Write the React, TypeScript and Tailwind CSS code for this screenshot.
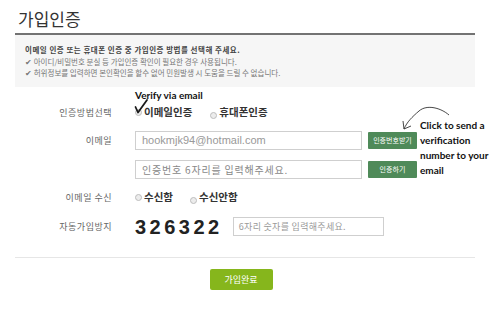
import React from "react";

const KR = { fontFamily: '"Noto Sans CJK KR", "Noto Sans", sans-serif' };
const EN = { fontFamily: 'Lato, "Liberation Sans", sans-serif' };

function Radio() {
  return <span className="inline-block w-[7px] h-[7px] rounded-full border border-[#bdbdbd] bg-[#ececec] shrink-0" />;
}

function Row({ label, children, className = "" }: { label: string; children: React.ReactNode; className?: string }) {
  return (
    <div className={"flex items-center " + className}>
      <div className="w-[112px] text-right text-[9px] tracking-[0.5px] text-[#666] leading-none shrink-0" style={KR}>
        {label}
      </div>
      <div className="ml-[23px] flex items-center">{children}</div>
    </div>
  );
}

export default function App() {
  return (
    <div className="relative w-[500px] h-[313px] bg-white overflow-hidden" style={KR}>
      <div className="ml-[15px] mr-[25px]">
        <h1 className="pl-[3px] pt-[7px] text-[17px] leading-[24px] text-[#333]" style={KR}>
          가입인증
        </h1>
        <div className="mt-[2px] h-[2px] bg-[#737373]" />
        <div className="h-[52px] bg-[#f6f6f6] pl-[10px] pt-[9px] text-[7.5px] leading-[11.5px] text-[#777]">
          <div className="font-bold text-[#444] tracking-[0.5px]">이메일 인증 또는 휴대폰 인증 중 가입인증 방법를 선택해 주세요.</div>
          <div>✔ 아이디/비밀번호 분실 등 가입인증 확인이 필요한 경우 사용됩니다.</div>
          <div>✔ 허위정보를 입력하면 본인확인을 할수 없어 민원발생 시 도움을 드릴 수 없습니다.</div>
        </div>
      </div>

      <div className="mt-[15px]">
        <Row label="인증방법선택" className="h-[20px]">
          <Radio />
          <span className="ml-[2px] text-[10.5px] font-bold text-[#333] leading-none">이메일인증</span>
          <span className="ml-[18px]"><Radio /></span>
          <span className="ml-[2px] text-[10.5px] font-bold text-[#333] leading-none">휴대폰인증</span>
        </Row>

        <Row label="이메일" className="mt-[9px] h-[19px]">
          <div
            className="w-[227px] h-[19px] border border-[#cfcfcf] bg-white pl-[6px] flex items-center text-[11px] text-[#999]"
            style={{ fontFamily: '"Liberation Sans", Arial, sans-serif' }}
          >
            hookmjk94@hotmail.com
          </div>
          <div className="ml-[6px] w-[49px] h-[17px] bg-[#4f8a59] rounded-[1px] flex items-center justify-center text-[7px] text-white leading-none">
            인증번호받기
          </div>
        </Row>

        <Row label="" className="mt-[10px] h-[19px]">
          <div className="w-[227px] h-[19px] border border-[#cfcfcf] bg-white pl-[6px] flex items-center text-[10px] tracking-[0.8px] text-[#888] leading-none">
            인증번호 6자리를 입력해주세요.
          </div>
          <div className="ml-[6px] w-[49px] h-[17px] bg-[#4f8a59] rounded-[1px] flex items-center justify-center text-[7px] text-white leading-none">
            인증하기
          </div>
        </Row>

        <Row label="이메일 수신" className="mt-[8px] h-[20px]">
          <Radio />
          <span className="ml-[2px] text-[10.5px] font-bold text-[#333] leading-none">수신함</span>
          <span className="ml-[17px]"><Radio /></span>
          <span className="ml-[2px] text-[10.5px] font-bold text-[#333] leading-none">수신안함</span>
        </Row>

        <Row label="자동가입방지" className="mt-[10px] h-[19px]">
          <span
            className="text-[20px] font-bold text-[#222] tracking-[3.5px] leading-none"
            style={{ fontFamily: '"Liberation Sans", Arial, sans-serif' }}
          >
            326322
          </span>
          <div className="ml-[10px] w-[151px] h-[19px] border border-[#cfcfcf] bg-white pl-[5px] flex items-center text-[9px] tracking-[0.3px] text-[#999] leading-none">
            6자리 숫자를 입력해주세요.
          </div>
        </Row>
      </div>

      <div className="ml-[15px] mr-[25px] mt-[21px] h-px bg-[#e6e6e6]" />

      <div className="mt-[11px] flex justify-center pr-[17px]">
        <div className="ml-[-1px] w-[63px] h-[21px] rounded-[2px] bg-[#86b61c] flex items-center justify-center text-[9px] text-white leading-none">
          가입완료
        </div>
      </div>

      {/* annotations */}
      <div className="absolute left-[135px] top-[90px] text-[10px] font-bold text-[#111] leading-none" style={EN}>
        Verify via email
      </div>
      <div className="absolute left-[420px] top-[118px] text-[10px] font-bold text-[#111] leading-[15px]" style={EN}>
        <div>Click to send a</div>
        <div>verification</div>
        <div>number to your</div>
        <div>email</div>
      </div>
      <svg className="absolute left-0 top-0" width="500" height="313" viewBox="0 0 500 313" fill="none">
        <path d="M135.5 107 L138 112.5 L147 100" stroke="#1a1a1a" strokeWidth="1.8" strokeLinecap="round" strokeLinejoin="round" />
        <path d="M449 115 C441 108 427 104 419 111 C412 117 407 122 404 129" stroke="#333" strokeWidth="0.9" />
        <path d="M403 121 L404 129 L411 126" stroke="#333" strokeWidth="0.9" />
      </svg>
    </div>
  );
}
